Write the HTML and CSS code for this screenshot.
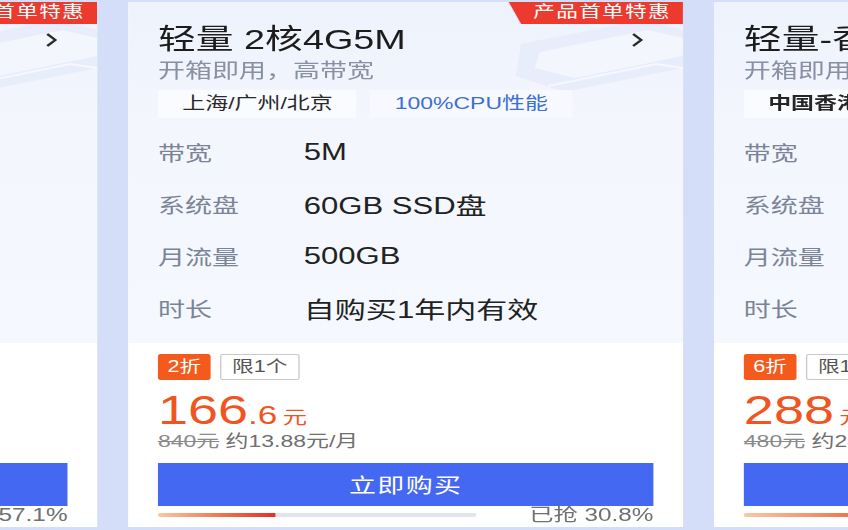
FILE: index.html
```html
<!DOCTYPE html>
<html lang="zh-CN">
<head>
<meta charset="utf-8">
<title>轻量应用服务器</title>
<link rel="stylesheet" href="styles.css">
</head>
<body>
<div class="stage">
  <div class="row">
    <!-- left card -->
    <div class="card">
      <div class="ribbon">产品首单特惠</div>
      <svg class="deco" viewBox="0 0 150 100" aria-hidden="true">
        <polygon points="30,38 120,14 150,24 150,62 62,86 26,70" fill="#e3e8fa" opacity=".6"/>
        <polygon points="44,46 124,24 150,32 150,50 70,72 40,62" fill="#ffffff" opacity=".5"/>
        <polyline points="50,80 130,58 150,62" fill="none" stroke="#ffffff" stroke-width="2" opacity=".6"/>
      </svg>
      <div class="card-top">
        <div class="title-row">
          <span class="title">轻量 2核2G4M</span>
          <svg class="chev" viewBox="0 0 10 16" aria-hidden="true"><polyline points="2,2 8,8 2,14" fill="none" stroke="#2b2b2b" stroke-width="2"/></svg>
        </div>
        <div class="subtitle">开箱即用，性价比高</div>
        <div class="tags"><span class="tag">上海/广州/北京</span></div>
        <div class="specs">
          <div class="spec"><span class="k">带宽</span><span class="v">4M</span></div>
          <div class="spec"><span class="k">系统盘</span><span class="v">50GB SSD盘</span></div>
          <div class="spec"><span class="k">月流量</span><span class="v">300GB</span></div>
          <div class="spec"><span class="k">时长</span><span class="v">自购买1年内有效</span></div>
        </div>
      </div>
      <div class="card-bottom">
        <div class="badges"><span class="disc">3折</span><span class="limit">限1个</span></div>
        <div class="price"><span class="int">79</span><span class="unit">元</span></div>
        <div class="orig"><s>264元</s> 约6.58元/月</div>
        <button class="buy">立即购买</button>
        <div class="progress"><div class="track"><div class="fill" style="width:57.1%"></div></div><span class="sold">已抢 57.1%</span></div>
      </div>
    </div>

    <!-- center card -->
    <div class="card">
      <div class="ribbon">产品首单特惠</div>
      <svg class="deco" viewBox="0 0 150 100" aria-hidden="true">
        <polygon points="30,38 120,14 150,24 150,62 62,86 26,70" fill="#e3e8fa" opacity=".6"/>
        <polygon points="44,46 124,24 150,32 150,50 70,72 40,62" fill="#ffffff" opacity=".5"/>
        <polyline points="50,80 130,58 150,62" fill="none" stroke="#ffffff" stroke-width="2" opacity=".6"/>
      </svg>
      <div class="card-top">
        <div class="title-row">
          <span class="title">轻量 2核4G5M</span>
          <svg class="chev" viewBox="0 0 10 16" aria-hidden="true"><polyline points="2,2 8,8 2,14" fill="none" stroke="#2b2b2b" stroke-width="2"/></svg>
        </div>
        <div class="subtitle">开箱即用，高带宽</div>
        <div class="tags"><span class="tag">上海/广州/北京</span><span class="tag tag-blue">100%CPU性能</span></div>
        <div class="specs">
          <div class="spec"><span class="k">带宽</span><span class="v">5M</span></div>
          <div class="spec"><span class="k">系统盘</span><span class="v">60GB SSD盘</span></div>
          <div class="spec"><span class="k">月流量</span><span class="v">500GB</span></div>
          <div class="spec"><span class="k">时长</span><span class="v">自购买1年内有效</span></div>
        </div>
      </div>
      <div class="card-bottom">
        <div class="badges"><span class="disc">2折</span><span class="limit">限1个</span></div>
        <div class="price"><span class="int">166</span><span class="dec">.6</span><span class="unit">元</span></div>
        <div class="orig"><s>840元</s> 约13.88元/月</div>
        <button class="buy">立即购买</button>
        <div class="progress"><div class="track"><div class="fill" style="width:36.7%"></div></div><span class="sold">已抢 30.8%</span></div>
      </div>
    </div>

    <!-- right card -->
    <div class="card">
      <div class="ribbon">产品首单特惠</div>
      <svg class="deco" viewBox="0 0 150 100" aria-hidden="true">
        <polygon points="30,38 120,14 150,24 150,62 62,86 26,70" fill="#e3e8fa" opacity=".6"/>
        <polygon points="44,46 124,24 150,32 150,50 70,72 40,62" fill="#ffffff" opacity=".5"/>
        <polyline points="50,80 130,58 150,62" fill="none" stroke="#ffffff" stroke-width="2" opacity=".6"/>
      </svg>
      <div class="card-top">
        <div class="title-row">
          <span class="title">轻量-香港 2核2G30M</span>
          <svg class="chev" viewBox="0 0 10 16" aria-hidden="true"><polyline points="2,2 8,8 2,14" fill="none" stroke="#2b2b2b" stroke-width="2"/></svg>
        </div>
        <div class="subtitle">开箱即用，免备案</div>
        <div class="tags"><span class="tag tag-strong">中国香港</span><span class="tag tag-blue">100%CPU性能</span></div>
        <div class="specs">
          <div class="spec"><span class="k">带宽</span><span class="v">30M</span></div>
          <div class="spec"><span class="k">系统盘</span><span class="v">50GB SSD盘</span></div>
          <div class="spec"><span class="k">月流量</span><span class="v">1024GB</span></div>
          <div class="spec"><span class="k">时长</span><span class="v">自购买1年内有效</span></div>
        </div>
      </div>
      <div class="card-bottom">
        <div class="badges"><span class="disc">6折</span><span class="limit">限1个</span></div>
        <div class="price"><span class="int">288</span><span class="unit">元</span></div>
        <div class="orig"><s>480元</s> 约24.00元/月</div>
        <button class="buy">立即购买</button>
        <div class="progress"><div class="track"><div class="fill" style="width:62%"></div></div><span class="sold">已抢 62.4%</span></div>
      </div>
    </div>
  </div>
</div>
</body>
</html>
```

FILE: styles.css
```css
html, body {
  margin: 0;
  padding: 0;
  overflow: hidden;
  background: #d4def8;
}

body {
  font-family: "Liberation Sans", "Noto Sans CJK SC", sans-serif;
  color: #222;
}

.stage {
  width: 628px;
  height: 530px;
  transform: scaleX(1.35);
  transform-origin: 0 0;
}

.row {
  display: flex;
  gap: 23px;
  margin-left: -339px;
  padding-top: 2px;
}

.card {
  flex: 0 0 411px;
  position: relative;
  background: #ffffff;
  overflow: hidden;
}

.ribbon {
  position: absolute;
  top: -2px;
  right: 0;
  width: 130px;
  height: 24px;
  line-height: 24px;
  background: #ec3a2e;
  color: #fff;
  font-size: 16px;
  letter-spacing: 1px;
  text-align: right;
  padding-right: 9px;
  box-sizing: border-box;
  clip-path: polygon(0 0, 100% 0, 100% 100%, 10px 100%);
  z-index: 2;
}

.deco {
  position: absolute;
  top: 4px;
  right: 0;
  width: 150px;
  height: 100px;
  z-index: 0;
}

.card-top {
  background: linear-gradient(180deg, #eef2fc 0%, #f3f6fd 35%, #f5f8fe 100%);
  padding: 20px 22px 9px;
}

.title-row {
  position: relative;
  z-index: 1;
  display: flex;
  align-items: center;
  justify-content: space-between;
  height: 36px;
}

.title {
  font-size: 28px;
  line-height: 36px;
  color: #1c1c1c;
  white-space: nowrap;
}

.chev {
  width: 10px;
  height: 16px;
  margin-right: 7px;
  flex: 0 0 auto;
}

.subtitle {
  position: relative;
  z-index: 1;
  font-size: 20px;
  line-height: 26px;
  color: #8790a5;
}

.tags {
  position: relative;
  z-index: 1;
  display: flex;
  gap: 10px;
  margin-top: 6px;
}

.tag {
  height: 28px;
  line-height: 28px;
  padding: 0 18px;
  font-size: 17px;
  color: #2a2a2a;
  background: #fafbff;
  white-space: nowrap;
}

.tag-blue {
  color: #3b6fd6;
  background: #f7f9ff;
}

.tag-strong {
  font-weight: bold;
  color: #262626;
}

.specs {
  padding-top: 8px;
}

.spec {
  display: flex;
  align-items: center;
  height: 52px;
}

.k {
  width: 108px;
  flex: 0 0 108px;
  font-size: 20px;
  color: #7b8497;
}

.v {
  font-size: 23px;
  color: #222;
  white-space: nowrap;
}

.card-bottom {
  padding: 11px 22px 3px;
  background: #fff;
}

.badges {
  display: flex;
  gap: 7px;
  height: 26px;
}

.disc {
  height: 26px;
  line-height: 26px;
  padding: 0 7px;
  background: #f35a1c;
  color: #fff;
  font-size: 16px;
  border-radius: 2px;
}

.limit {
  height: 24px;
  line-height: 24px;
  padding: 0 8px;
  border: 1px solid #c9c9cc;
  border-radius: 2px;
  color: #555;
  font-size: 16px;
}

.price {
  margin-top: 8px;
  height: 44px;
  line-height: 44px;
  color: #f0551f;
  white-space: nowrap;
}

.int {
  font-size: 40px;
}

.dec {
  font-size: 26px;
}

.unit {
  font-size: 18px;
  margin-left: 4px;
}

.orig {
  font-size: 17px;
  line-height: 20px;
  color: #6f6f6f;
  white-space: nowrap;
}

.orig s {
  color: #8a8a8a;
}

.buy {
  display: block;
  width: 100%;
  height: 43px;
  margin-top: 11px;
  border: none;
  background: #4468f2;
  color: #fff;
  font-family: "Liberation Sans", "Noto Sans CJK SC", sans-serif;
  font-size: 20px;
  letter-spacing: 1px;
  padding: 0;
}

.progress {
  display: flex;
  align-items: center;
  height: 18px;
}

.track {
  width: 236px;
  height: 4px;
  background: #e3e4ea;
  border-radius: 2px;
  overflow: hidden;
}

.fill {
  height: 100%;
  background: linear-gradient(90deg, #fbc9a2 0%, #f07a55 50%, #e3302a 100%);
}

.sold {
  margin-left: auto;
  font-size: 18px;
  line-height: 18px;
  color: #707070;
  white-space: nowrap;
}
```
